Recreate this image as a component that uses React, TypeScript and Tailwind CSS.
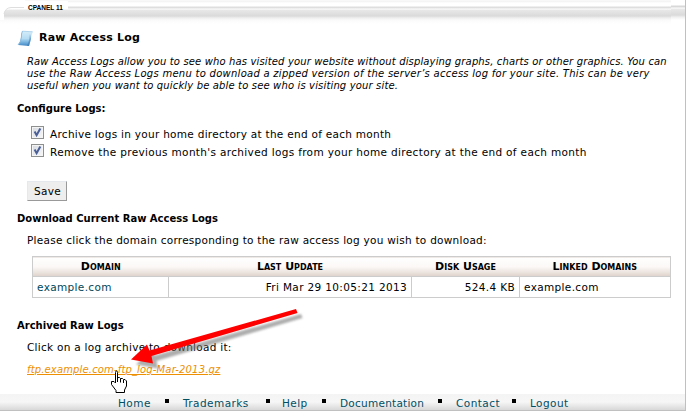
import type { ReactNode } from "react";

function Check() {
  return (
    <span className="mt-[-1px] mr-[6px] flex h-[13px] w-[13px] items-center justify-center border border-[#8e8f8f] bg-gradient-to-br from-[#d5d9df] to-[#f8f8f8] shadow-[inset_0_0_0_1px_#f4f4f4]">
      <svg width="11" height="11" viewBox="0 0 11 11" fill="none">
        <path d="M2.6 4.6 L4.6 8.2 L8.3 1.5" stroke="#4a5f97" strokeWidth="2" />
      </svg>
    </span>
  );
}

function Heading({ children }: { children: ReactNode }) {
  return <h2 className="flex h-[16px] items-center whitespace-nowrap pt-[2px] pl-[17px] text-[10px] font-bold">{children}</h2>;
}

function HeadCell({ children }: { children: ReactNode }) {
  return (
    <th className="h-[20px] bg-gradient-to-b from-white via-[#fbf8f6] to-[#dfd3cb] p-0 pt-px text-[11px] leading-[18px] font-bold tracking-normal [font-variant:small-caps]">
      {children}
    </th>
  );
}

const cell = "h-[21px] border border-[#ccc] py-0 leading-[19px] whitespace-nowrap tracking-[0.35px]";

function Dot() {
  return <span className="mt-[-3px] h-[4px] w-[4px] shrink-0 bg-black" />;
}

export default function App() {
  return (
    <div className="relative flex h-[412px] w-[687px] flex-col overflow-hidden bg-white font-['Verdana','DejaVu_Sans',sans-serif] text-[10.5px] leading-[12px] text-black">
      <div className="flex h-[411px] w-[686px] flex-col border-r border-b border-[#c0c0c0]">
        <header className="relative h-[28px] bg-[linear-gradient(to_bottom,#fff_0px,#f1f1f1_1px,#fff_3px,#fff_6px,#dedede_7px,#dedede_8px,#fff_9px,#e8e8e8_10px,#dadada_16px,#efefef_18px,#fafafa_20px,#fff_24px)]">
          <div className="absolute top-0 right-0 h-[28px] w-[14px] bg-[linear-gradient(to_bottom,#fff_0px,#fff_5px,#d8d8d8_6px,#d8d8d8_7px,#fff_8px,#e8e8e8_9px,#dadada_15px,#efefef_17px,#fafafa_19px,#fff_20px)]" />
          <svg className="absolute top-0 left-0" width="70" height="28">
            <path d="M0 0H25V9H10Q5 9 4 13V20H0Z" fill="#fff" />
            <path d="M24 7.5H11Q5 8 4 14" fill="none" stroke="#dedede" />
            <rect x="24" y="1" width="44" height="8" fill="#fff" />
          </svg>
          <span className="absolute top-[3px] left-[28px] font-['Liberation_Sans',sans-serif] text-[6.5px] leading-[9px] font-bold whitespace-nowrap tracking-[0]">CPANEL 11</span>
        </header>

        <div className="flex h-[20px] items-center pl-[17px]">
          <svg width="17" height="17" viewBox="0 0 17 17" className="mr-[5px]">
            <defs>
              <linearGradient id="note" x1="0" y1="0" x2="0" y2="1">
                <stop offset="0" stopColor="#d6edf9" />
                <stop offset="0.5" stopColor="#b5dcf3" />
                <stop offset="0.8" stopColor="#6aaadb" />
                <stop offset="1" stopColor="#4384c0" />
              </linearGradient>
            </defs>
            <path d="M5.500 1 L16 1.500 Q14.500 4 14 9 L12 16 L1 15 Q4 11 4 5 Z" fill="url(#note)" />
            <path d="M5.500 1Q4 4 4.500 7Q4 12 1 15" fill="none" stroke="#8dbde0" />
            <path d="M5.500 1.200L15.500 1.800" stroke="#a5cde8" strokeWidth=".8" />
            <path d="M14 9L12 16L10 15.800Q13 10 13 4" fill="#3b78b2" opacity=".55" />
          </svg>
          <h1 className="text-[11px] font-bold tracking-[0.2px]">Raw Access Log</h1>
        </div>

        <div className="mt-[8px] h-[36px] pl-[27px] text-[10px] whitespace-nowrap italic">
          <p className="h-[12px] tracking-[0.14px]">Raw Access Logs allow you to see who has visited your website without displaying graphs, charts or other graphics. You can</p>
          <p className="h-[12px] tracking-[0.27px]">use the Raw Access Logs menu to download a zipped version of the server’s access log for your site. This can be very</p>
          <p className="h-[12px] tracking-[0.15px]">useful when you want to quickly be able to see who is visiting your site.</p>
        </div>

        <div className="h-[8px]" />
        <Heading>Configure Logs:</Heading>
        <div className="mt-[8px] flex h-[18px] items-center pl-[31px] whitespace-nowrap"><Check /><span className="pt-[2px] tracking-[0.28px]">Archive logs in your home directory at the end of each month</span></div>
        <div className="flex h-[18px] items-center pl-[31px] whitespace-nowrap"><Check /><span className="pt-[2px] tracking-[0.34px]">Remove the previous month's archived logs from your home directory at the end of each month</span></div>

        <button className="mt-[21px] ml-[27px] flex h-[20px] w-[40px] shrink-0 items-center justify-center border border-t-[#e5e9ee] border-r-[#999] border-b-[#999] border-l-[#e5e9ee] bg-[#eee] pr-px pl-[2px] tracking-[0.3px]">Save</button>

        <div className="h-[9px]" />
        <Heading>Download Current Raw Access Logs</Heading>
        <p className="mt-[8px] h-[12px] pl-[27px] whitespace-nowrap tracking-[0.26px]">Please click the domain corresponding to the raw access log you wish to download:</p>

        <table className="mt-[10px] ml-[32px] w-[639px] table-fixed border-collapse border border-[#ccc]">
          <colgroup>
            <col className="w-[136px]" />
            <col className="w-[243px]" />
            <col className="w-[108px]" />
            <col className="w-[151px]" />
          </colgroup>
          <thead>
            <tr><HeadCell>Domain</HeadCell><HeadCell>Last Update</HeadCell><HeadCell>Disk Usage</HeadCell><HeadCell>Linked Domains</HeadCell></tr>
          </thead>
          <tbody>
            <tr>
              <td className={`${cell} px-[4px]`}><a className="text-[#004759]">example.com</a></td>
              <td className={`${cell} pr-[4px] text-right`}>Fri Mar 29 10:05:21 2013</td>
              <td className={`${cell} pr-[4px] text-right`}>524.4 KB</td>
              <td className={`${cell} px-[4px]`}>example.com</td>
            </tr>
          </tbody>
        </table>

        <div className="h-[19px]" />
        <Heading>Archived Raw Logs</Heading>
        <p className="mt-[8px] h-[12px] pl-[27px] whitespace-nowrap tracking-[0.27px]">Click on a log archive to download it:</p>
        <p className="mt-[11px] h-[12px] pl-[27px] text-[10px] whitespace-nowrap"><a className="tracking-[0.15px] text-[#ed8f00] italic underline">ftp.example.com-ftp_log-Mar-2013.gz</a></p>

        <footer className="mt-auto flex h-[16px] shrink-0 items-center bg-gradient-to-b from-[#f4f4f4] via-[#f6f6f6] to-[#d8d8d8] pt-px pl-[118px] tracking-[0.45px] text-[#004e64]">
          <span className="w-[47px]">Home</span><Dot />
          <span className="w-[97px] pl-[14px]">Trademarks</span><Dot />
          <span className="w-[52px] pl-[12px]">Help</span><Dot />
          <span className="w-[112px] pl-[14px] tracking-[0.25px]">Documentation</span><Dot />
          <span className="w-[70px] pl-[14px]">Contact</span><Dot />
          <span className="pl-[14px]">Logout</span>
        </footer>
      </div>

      <svg className="pointer-events-none absolute top-0 left-0" width="687" height="412">
        <defs>
          <filter id="soft" x="-10%" y="-10%" width="120%" height="120%"><feGaussianBlur stdDeviation="1.3" /></filter>
        </defs>
        <path d="M296 309L297.500 313L151.500 356L153 363.500L131 359.500L147 344.500L149.500 350.500Z" transform="translate(5 5)" fill="#777" opacity=".6" filter="url(#soft)" />
        <path d="M296 309L297.500 313L151.500 356L153 363.500L131 359.500L147 344.500L149.500 350.500Z" fill="#f00" />
        <path d="M115.500 372.500q0-1.500 1-1.500t1 1.500v5h2l1 1h2l1 1h1.500l1.500 1.500v5l-2 4v2.500h-8.500v-2l-4.500-6v-3h2.500l1.500 1.500z" fill="#fff" stroke="#000" />
        <path d="M117.500 377v5M120.500 378.500v4M123.500 380v3" stroke="#000" fill="none" />
      </svg>
    </div>
  );
}
